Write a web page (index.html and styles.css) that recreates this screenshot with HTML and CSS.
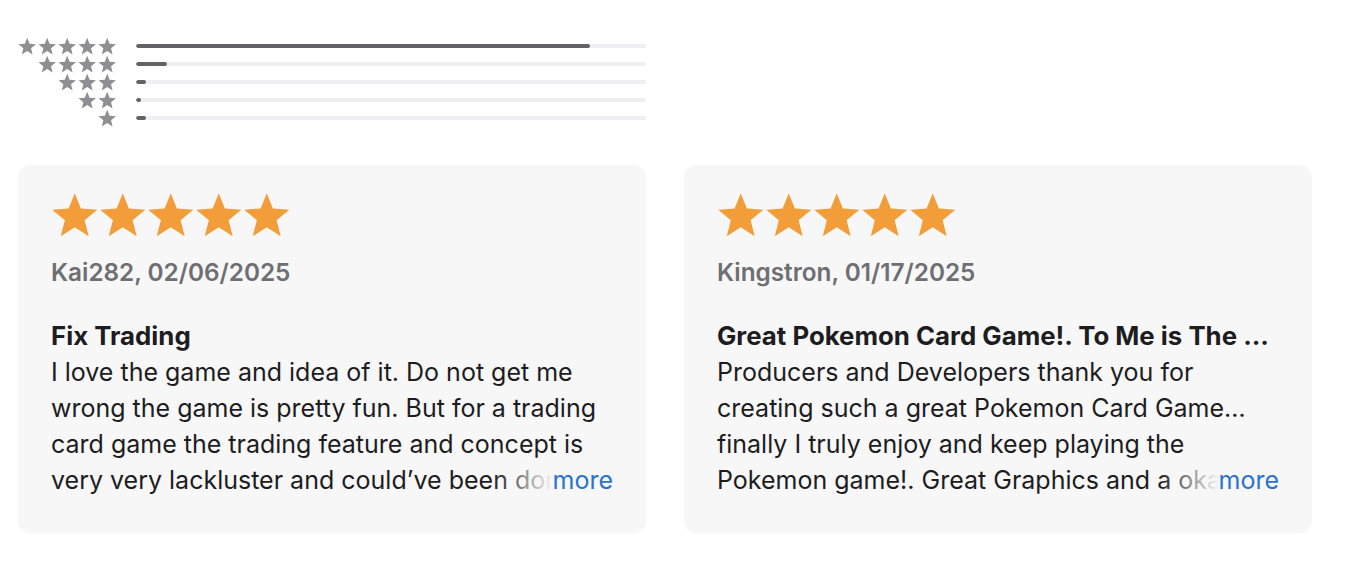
FILE: index.html
```html
<!DOCTYPE html>
<html lang="en">
<head>
<meta charset="utf-8">
<title>Ratings and Reviews</title>
<link rel="stylesheet" href="styles.css">
</head>
<body>
<svg width="0" height="0" class="defs" aria-hidden="true">
  <defs>
    <symbol id="star" viewBox="0 0 24 24">
      <path d="M12 1l3.1 7.75 8.3.55-6.4 5.3 2.05 8.1L12 18.25l-7.05 4.45 2.05-8.1-6.4-5.3 8.3-.55z"/>
    </symbol>
  </defs>
</svg>
<main class="page">
  <section class="histogram">
    <div class="hist-row">
      <div class="mini-stars"><svg><use href="#star"/></svg><svg><use href="#star"/></svg><svg><use href="#star"/></svg><svg><use href="#star"/></svg><svg><use href="#star"/></svg></div>
      <div class="track"><div class="fill" style="width:89%"></div></div>
    </div>
    <div class="hist-row">
      <div class="mini-stars"><svg><use href="#star"/></svg><svg><use href="#star"/></svg><svg><use href="#star"/></svg><svg><use href="#star"/></svg></div>
      <div class="track"><div class="fill" style="width:6%"></div></div>
    </div>
    <div class="hist-row">
      <div class="mini-stars"><svg><use href="#star"/></svg><svg><use href="#star"/></svg><svg><use href="#star"/></svg></div>
      <div class="track"><div class="fill" style="width:2%"></div></div>
    </div>
    <div class="hist-row">
      <div class="mini-stars"><svg><use href="#star"/></svg><svg><use href="#star"/></svg></div>
      <div class="track"><div class="fill" style="width:1%"></div></div>
    </div>
    <div class="hist-row">
      <div class="mini-stars"><svg><use href="#star"/></svg></div>
      <div class="track"><div class="fill" style="width:2%"></div></div>
    </div>
  </section>

  <section class="reviews">
    <article class="card">
      <div class="stars"><svg><use href="#star"/></svg><svg><use href="#star"/></svg><svg><use href="#star"/></svg><svg><use href="#star"/></svg><svg><use href="#star"/></svg></div>
      <p class="meta">Kai282, 02/06/2025</p>
      <h3 class="title">Fix Trading</h3>
      <div class="body">
        <p>I love the game and idea of it. Do not get me wrong the game is pretty fun. But for a trading card game the trading feature and concept is very very lackluster and could’ve been done so much better than it is right now, please fix it.</p>
        <button class="more">more</button>
      </div>
    </article>
    <article class="card">
      <div class="stars"><svg><use href="#star"/></svg><svg><use href="#star"/></svg><svg><use href="#star"/></svg><svg><use href="#star"/></svg><svg><use href="#star"/></svg></div>
      <p class="meta">Kingstron, 01/17/2025</p>
      <h3 class="title">Great Pokemon Card Game!. To Me is The ...</h3>
      <div class="body">
        <p>Producers and Developers thank you for creating such a great Pokemon Card Game… finally I truly enjoy and keep playing the Pokemon game!. Great Graphics and a okay amount of content for a start, keep it up.</p>
        <button class="more">more</button>
      </div>
    </article>
  </section>
</main>
</body>
</html>
```

FILE: styles.css
```css
* { box-sizing: border-box; }

html, body {
  margin: 0;
  padding: 0;
  background: #ffffff;
}

body {
  font-family: "Inter", "Noto Sans", "Liberation Sans", sans-serif;
  color: #1d1d1f;
}

.defs {
  position: absolute;
  width: 0;
  height: 0;
}

.page {
  padding: 37px 34px 0 18px;
}

/* histogram */
.histogram {
  display: flex;
  flex-direction: column;
  width: 628px;
}

.hist-row {
  display: flex;
  align-items: center;
  height: 18px;
  gap: 20px;
}

.mini-stars {
  width: 98px;
  display: flex;
  justify-content: flex-end;
  gap: 1.5px;
}

.mini-stars svg {
  width: 18.4px;
  height: 18.4px;
  fill: #8e8e93;
}

.track {
  flex: 1;
  height: 4px;
  border-radius: 2px;
  background: #efeff2;
  overflow: hidden;
}

.fill {
  height: 100%;
  border-radius: 2px;
  background: #636366;
}

/* reviews */
.reviews {
  margin-top: 38px;
  display: grid;
  grid-template-columns: 628px 628px;
  gap: 38px;
}

.card {
  background: #f7f7f7;
  border-radius: 12px;
  padding: 26px 33px 35px 33px;
}

.stars {
  display: flex;
  gap: 0.5px;
  height: 48px;
}

.stars svg {
  width: 47.5px;
  height: 48px;
  fill: #f39c3a;
}

.meta {
  margin: 15px 0 0;
  font-size: 24.3px;
  line-height: 36px;
  font-weight: 600;
  color: #6e6e73;
}

.title {
  margin: 28px 0 0;
  font-size: 25.8px;
  line-height: 36px;
  font-weight: 700;
  color: #1d1d1f;
  white-space: nowrap;
  overflow: hidden;
  text-overflow: ellipsis;
}

.body {
  position: relative;
  height: 144px;
  overflow: hidden;
}

.body p {
  margin: 0;
  font-size: 25px;
  line-height: 36px;
  font-weight: 400;
}

.more {
  position: absolute;
  right: 0;
  bottom: 0;
  border: 0;
  margin: 0;
  padding: 0 0 0 60px;
  font: inherit;
  font-size: 25px;
  line-height: 36px;
  color: #2a72d0;
  background: linear-gradient(to right, rgba(247,247,247,0) 0, #f7f7f7 60px);
  cursor: pointer;
}
```
